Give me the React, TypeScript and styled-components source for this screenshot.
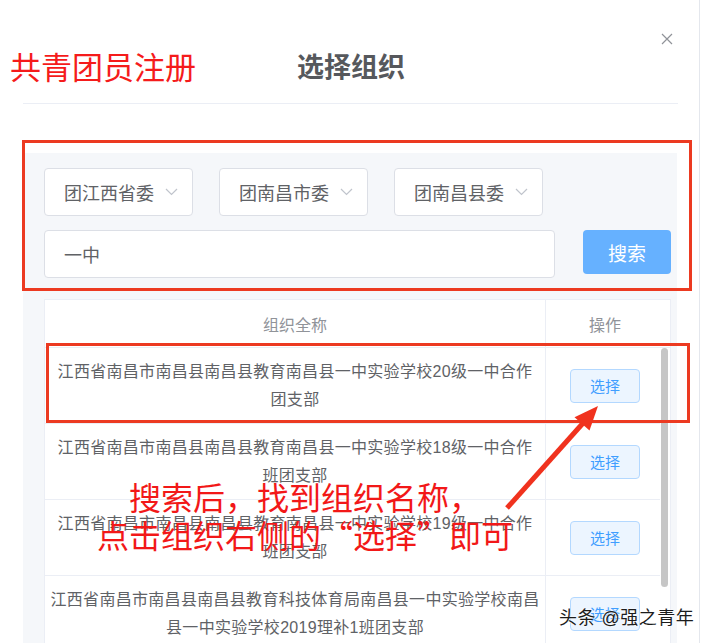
import React from "react";
import styled, { createGlobalStyle } from "styled-components";

const GlobalStyle = createGlobalStyle`
  html, body {
    margin: 0;
    padding: 0;
    background: #fff;
    overflow: hidden;
  }
  body {
    font-family: "Liberation Sans", "Noto Sans CJK SC", sans-serif;
  }
`;

const Dialog = styled.div`
  position: relative;
  width: 700px;
  height: 643px;
  box-sizing: border-box;
  border-right: 1px solid #e4e7ed;
  overflow: hidden;
  background: #fff;
`;

const Header = styled.div`
  display: grid;
  grid-template-columns: 287px 1fr auto;
  align-items: center;
  height: 103px;
  box-sizing: border-box;
  padding: 27px 26px 0 10px;
`;

const RedLabel = styled.div`
  font-size: 31px;
  line-height: 1;
  color: #f51b1b;
  font-family: "Noto Sans CJK SC", sans-serif;
`;

const DialogTitle = styled.div`
  font-size: 27px;
  line-height: 1;
  font-weight: 700;
  color: #56585c;
  font-family: "Noto Sans CJK SC", sans-serif;
`;

const CloseButton = styled.button`
  align-self: start;
  margin-top: 6px;
  width: 12px;
  height: 12px;
  padding: 0;
  border: none;
  background: transparent;
  display: flex;
`;

const Divider = styled.div`
  height: 1px;
  margin: 0 21px 0 23px;
  background: #ebeef5;
`;

const FilterPanel = styled.div`
  margin: 49px 22px 0 23px;
  padding: 15px 6px 0 21px;
  background: #f5f7fa;
  height: 600px;
`;

const SelectRow = styled.div`
  display: flex;
  gap: 26px;
`;

const SelectBox = styled.div`
  width: 149px;
  height: 48px;
  box-sizing: border-box;
  border: 1px solid #dcdfe6;
  border-radius: 4px;
  background: #fff;
  display: flex;
  align-items: center;
  justify-content: space-between;
  padding: 0 14px 0 19px;
  font-size: 18px;
  color: #606266;
`;

const SearchRow = styled.div`
  display: flex;
  align-items: flex-start;
  justify-content: space-between;
  margin-top: 14px;
`;

const SearchInput = styled.input`
  width: 511px;
  height: 48px;
  box-sizing: border-box;
  border: 1px solid #dcdfe6;
  border-radius: 4px;
  padding: 0 19px;
  font-family: inherit;
  font-size: 18px;
  color: #606266;
  outline: none;
`;

const SearchButton = styled.button`
  width: 88px;
  height: 44px;
  border: none;
  border-radius: 4px;
  background: #66b1ff;
  color: #fff;
  font-family: inherit;
  font-size: 19px;
`;

const Table = styled.div`
  margin-top: 21px;
  border: 1px solid #ebeef5;
  background: #fff;
`;

const HeadRow = styled.div`
  display: grid;
  grid-template-columns: 501px 1fr;
  height: 48px;
  box-sizing: border-box;
  padding-right: 10px;
  border-bottom: 1px solid #ebeef5;
`;

const HeadCell = styled.div<{ $divider?: boolean }>`
  display: flex;
  align-items: center;
  justify-content: center;
  padding-left: ${(p) => (p.$divider ? "0" : "4px")};
  font-size: 16px;
  color: #909399;
  border-right: ${(p) => (p.$divider ? "1px solid #ebeef5" : "none")};
`;

const Body = styled.div`
  display: flex;
  height: 301px;
  overflow: hidden;
`;

const RowList = styled.div`
  flex: 1;
`;

const ScrollTrack = styled.div`
  width: 10px;
  flex: none;
`;

const ScrollThumb = styled.div`
  width: 7px;
  height: 239px;
  margin-left: 1px;
  border-radius: 4px;
  background: #c6c6c6;
`;

const Row = styled.div`
  display: grid;
  grid-template-columns: 501px 1fr;
  height: 76px;
  box-sizing: border-box;
  border-bottom: 1px solid #ebeef5;
`;

const NameCell = styled.div`
  display: flex;
  align-items: center;
  justify-content: center;
  box-sizing: border-box;
  padding: 0 5px;
  border-right: 1px solid #ebeef5;
  text-align: center;
  font-size: 16px;
  line-height: 28px;
  letter-spacing: 0.3px;
  color: #606266;
`;

const OpCell = styled.div`
  display: flex;
  align-items: center;
  justify-content: center;
  padding-left: 4px;
`;

const PickButton = styled.button`
  width: 70px;
  height: 34px;
  border: 1px solid #b3d8ff;
  border-radius: 4px;
  background: #ecf5ff;
  color: #409eff;
  font-family: inherit;
  font-size: 15px;
  padding: 0;
`;

const Highlight = styled.div<{ $left: number; $top: number; $w: number; $h: number }>`
  position: absolute;
  left: ${(p) => p.$left}px;
  top: ${(p) => p.$top}px;
  width: ${(p) => p.$w}px;
  height: ${(p) => p.$h}px;
  box-sizing: border-box;
  border: 3px solid #ec3a21;
  pointer-events: none;
`;

const Arrow = styled.svg`
  position: absolute;
  left: 500px;
  top: 400px;
  pointer-events: none;
`;

const Annotation = styled.div`
  position: absolute;
  left: 97px;
  top: 477px;
  font-family: "Noto Sans CJK SC", sans-serif;
  font-variant-east-asian: full-width;
  font-size: 32px;
  line-height: 38px;
  color: #f21818;
  pointer-events: none;
`;

const AnnotationLine = styled.div<{ $indent?: boolean }>`
  padding-left: ${(p) => (p.$indent ? "32px" : "0")};
  white-space: nowrap;
`;

const Watermark = styled.div`
  position: absolute;
  left: 559px;
  top: 606px;
  font-size: 18px;
  line-height: 24px;
  letter-spacing: 0.5px;
  color: #1c1c1c;
  text-shadow: 0 0 2px #fff, 0 0 2px #fff;
  white-space: nowrap;
`;

const Chevron = () => (
  <svg width="13" height="8" viewBox="0 0 13 8">
    <polyline points="1,1 6.5,6.5 12,1" fill="none" stroke="#c0c4cc" strokeWidth="1.2" />
  </svg>
);

const orgs = ["团江西省委", "团南昌市委", "团南昌县委"];

const rows = [
  "江西省南昌市南昌县南昌县教育南昌县一中实验学校20级一中合作团支部",
  "江西省南昌市南昌县南昌县教育南昌县一中实验学校18级一中合作班团支部",
  "江西省南昌市南昌县南昌县教育南昌县一中实验学校19级一中合作班团支部",
  "江西省南昌市南昌县南昌县教育科技体育局南昌县一中实验学校南昌县一中实验学校2019理补1班团支部",
  "江西省南昌市南昌县南昌县教育南昌县一中实验学校21级一中合作团支部",
];

export default function App() {
  return (
    <>
      <GlobalStyle />
      <Dialog>
        <Header>
          <RedLabel>共青团员注册</RedLabel>
          <DialogTitle>选择组织</DialogTitle>
          <CloseButton>
            <svg width="12" height="12" viewBox="0 0 12 12">
              <path d="M1 1L11 11M11 1L1 11" stroke="#909399" strokeWidth="1.2" />
            </svg>
          </CloseButton>
        </Header>
        <Divider />
        <FilterPanel>
          <SelectRow>
            {orgs.map((o) => (
              <SelectBox key={o}>
                <span>{o}</span>
                <Chevron />
              </SelectBox>
            ))}
          </SelectRow>
          <SearchRow>
            <SearchInput defaultValue="一中" />
            <SearchButton>搜索</SearchButton>
          </SearchRow>
          <Table>
            <HeadRow>
              <HeadCell $divider>组织全称</HeadCell>
              <HeadCell>操作</HeadCell>
            </HeadRow>
            <Body>
              <RowList>
                {rows.map((r) => (
                  <Row key={r}>
                    <NameCell>{r}</NameCell>
                    <OpCell>
                      <PickButton>选择</PickButton>
                    </OpCell>
                  </Row>
                ))}
              </RowList>
              <ScrollTrack>
                <ScrollThumb />
              </ScrollTrack>
            </Body>
          </Table>
        </FilterPanel>

        <Highlight $left={22} $top={140} $w={670} $h={151} />
        <Highlight $left={46} $top={343} $w={644} $h={80} />

        <Arrow width="105" height="115" viewBox="0 0 105 115">
          <line x1="7" y1="108" x2="84" y2="22" stroke="#f0321e" strokeWidth="5" />
          <polygon points="98,6 89.5,30.6 74.5,17.2" fill="#f0321e" />
        </Arrow>

        <Annotation>
          <AnnotationLine $indent>搜索后，找到组织名称，</AnnotationLine>
          <AnnotationLine>点击组织右侧的“选择”即可</AnnotationLine>
        </Annotation>

        <Watermark>头条 @强之青年</Watermark>
      </Dialog>
    </>
  );
}
